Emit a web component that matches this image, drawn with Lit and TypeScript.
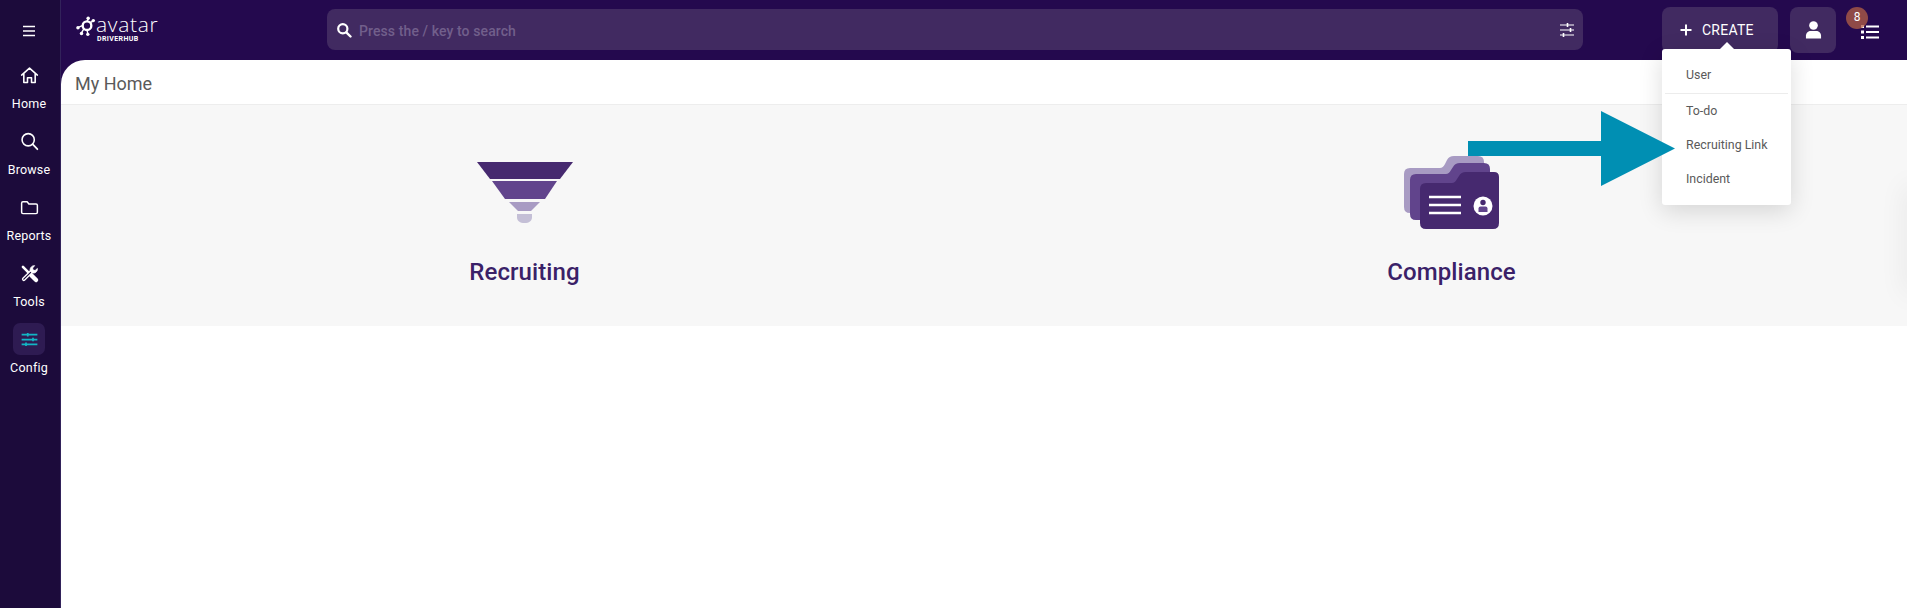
import { LitElement, html, css, svg } from "lit";
import { customElement } from "lit/decorators.js";

const navIcons: Record<string, unknown> = {
  Home: svg`<path d="M3 11.500 12 3.500l9 8M5.500 9.800V20h4.200v-5.500h4.600V20h4.200V9.800" fill="none" stroke="#fff" stroke-width="1.800" stroke-linejoin="round" stroke-linecap="round"/>`,
  Browse: svg`<circle cx="10.500" cy="10" r="7" fill="none" stroke="#fff" stroke-width="1.800"/><path d="M15.800 15.300 21 20.800" stroke="#fff" stroke-width="2" stroke-linecap="round"/>`,
  Reports: svg`<path d="M3 7A1.500 1.500 0 0 1 4.500 5.500h4.800l2 2.500h8.200A1.500 1.500 0 0 1 21 9.500v8A1.500 1.500 0 0 1 19.500 19h-15A1.500 1.500 0 0 1 3 17.500z" fill="none" stroke="#fff" stroke-width="1.700" stroke-linejoin="round"/>`,
  Tools: svg`<path d="M4.500 4.500 11 11" stroke="#fff" stroke-width="3" stroke-linecap="round"/><path d="M14 14l5.500 5.500" stroke="#fff" stroke-width="5" stroke-linecap="round"/><path d="M5.500 18.500 14.500 9.500" stroke="#fff" stroke-width="4.400" stroke-linecap="round"/><path d="M5.500 18.500 14.500 9.500" stroke="#1c0b3b" stroke-width="1.400" stroke-linecap="round"/><path d="M13 9.500c-1-2.800.8-6.500 4.800-6.500l-2.300 2.700.5 2.400 2.400.5L21 6.300c.300 4-3.200 5.900-6 4.800z" fill="#fff" stroke="#fff" stroke-width="1"/>`,
};

@customElement("app-root")
export class AppRoot extends LitElement {
  static styles = css`
    :host {
      display: grid;
      grid-template-columns: 61px 1fr;
      height: 608px;
      position: relative;
      overflow: hidden;
      font-family: Roboto, "Liberation Sans", sans-serif;
      background: #24094e;
    }
    .side {
      background: #1c0b3b;
      border-right: 1px solid #32225a;
      box-sizing: border-box;
      display: flex;
      flex-direction: column;
      align-items: center;
      padding: 21px 2px 0 0;
    }
    .burger { width: 20px; height: 20px; display: block; margin-bottom: 18px; }
    .nav {
      height: 66px;
      width: 100%;
      display: flex;
      flex-direction: column;
      align-items: center;
      color: #fff;
      font-size: 12.500px;
      letter-spacing: 0.2px;
      line-height: 16px;
    }
    .nav .ic {
      width: 32px;
      height: 32px;
      border-radius: 7px;
      display: flex;
      align-items: center;
      justify-content: center;
      margin-bottom: 5px;
    }
    .nav svg { width: 21px; height: 21px; }
    .nav.on .ic { background: #2e1b52; }
    .main { display: flex; flex-direction: column; min-width: 0; }
    .top {
      height: 60px;
      flex: none;
      display: flex;
      align-items: flex-start;
      background: #24094e;
    }
    .logo { margin: 14px 0 0 15px; width: 86px; height: 30px; flex: none; position: relative; }
    .logo svg { display: block; width: 22px; height: 21px; position: absolute; left: 0; top: 2px; }
    .logo .a { position: absolute; left: 20px; top: 0; color: #fff; font: 300 21px/21px "Open Sans", Roboto, sans-serif; letter-spacing: .7px; }
    .logo .d { position: absolute; left: 21px; top: 21px; color: #fff; font: 700 7px/8px Roboto, sans-serif; letter-spacing: .4px; }
    .search {
      margin: 9px 0 0 165px;
      width: 1256px;
      height: 41px;
      border-radius: 8px;
      background: #412a61;
      display: flex;
      align-items: center;
      padding: 0 8px 0 9px;
      box-sizing: border-box;
      flex: none;
    }
    .search .ph { flex: 1; margin-left: 7px; padding-top: 2px; font-size: 14px; font-weight: 500; color: #715f8b; letter-spacing: .1px; }
    .create {
      margin: 7px 0 0 79px;
      width: 116px;
      height: 46px;
      border-radius: 8px;
      background: #412a61;
      color: #fff;
      font-size: 14px;
      font-weight: 400;
      display: flex;
      align-items: center;
      padding-left: 18px;
      box-sizing: border-box;
      gap: 10px;
      flex: none;
      letter-spacing: .25px;
    }
    .user {
      margin: 7px 0 0 12px;
      width: 46px;
      height: 46px;
      border-radius: 8px;
      background: #412a61;
      display: flex;
      align-items: center;
      justify-content: center;
      flex: none;
    }
    .user svg { margin-left: 1px; }
    .tasks { margin: 25px 0 0 25px; flex: none; position: relative; width: 18px; height: 14px; }
    .tasks svg { display: block; }
    .badge {
      position: absolute;
      left: -15px;
      top: -18px;
      width: 22px;
      height: 22px;
      border-radius: 50%;
      background: rgba(179, 96, 69, 0.75);
      color: #fff;
      font-size: 12px;
      line-height: 20px;
      text-align: center;
    }
    .content {
      flex: 1;
      background: #fff;
      border-top-left-radius: 24px;
      display: flex;
      flex-direction: column;
    }
    .title {
      height: 45px;
      flex: none;
      box-sizing: border-box;
      padding: 2px 14px 0;
      display: flex;
      align-items: center;
      font-size: 18px;
      color: #5a5a5a;
      border-bottom: 1px solid #ededed;
    }
    .band {
      height: 221px;
      background: #f7f7f7;
      display: grid;
      grid-template-columns: 927px 927px;
      flex: none;
    }
    .card {
      display: flex;
      flex-direction: column;
      align-items: center;
      padding-top: 50px;
      color: #3a2168;
      font-size: 24px;
      font-weight: 500;
      line-height: 30px;
      letter-spacing: .1px;
    }
    .card svg { display: block; height: 78px; margin-bottom: 24px; }
    .menu {
      position: absolute;
      left: 1662px;
      top: 49px;
      width: 129px;
      height: 156px;
      background: #fff;
      border-radius: 3px;
      box-shadow: 0 6px 24px rgba(0, 0, 0, 0.14);
      box-sizing: border-box;
      padding: 8px 3px 0;
      font-size: 12.400px;
      color: #5a5a5a;
    }
    .menu::before {
      content: "";
      position: absolute;
      left: 58px;
      top: -7px;
      border: 7px solid transparent;
      border-top: 0;
      border-bottom-color: #fff;
    }
    .menu div { height: 34px; line-height: 34px; padding-left: 21px; }
    .menu .u { height: 36px; line-height: 35px; border-bottom: 1px solid #ececec; margin-bottom: 0; }
    .arrow { position: absolute; left: 1468px; top: 111px; width: 207px; height: 75px; display: block; }
    .edge {
      position: absolute;
      left: 1912px;
      top: 190px;
      width: 4px;
      height: 100px;
      box-shadow: 0 0 28px 4px rgba(0, 0, 0, 0.1);
    }
  `;

  private navItem(name: string) {
    return html`<div class="nav"><span class="ic"><svg viewBox="0 0 24 24">${navIcons[name]}</svg></span>${name}</div>`;
  }

  render() {
    return html`
      <aside class="side">
        <svg class="burger" viewBox="0 0 20 20"><path d="M4 5.500h12M4 10h12M4 14.500h12" stroke="#fff" stroke-width="1.300"/></svg>
        ${["Home", "Browse", "Reports", "Tools"].map((n) => this.navItem(n))}
        <div class="nav on">
          <span class="ic">
            <svg viewBox="0 0 24 24">
              <path d="M3 6.500h18M3 12h18M3 17.500h18" stroke="#12b5c4" stroke-width="2"/>
              <path d="M10 4.500v4M16 10v4M8 15.500v4" stroke="#12b5c4" stroke-width="2"/>
            </svg>
          </span>Config
        </div>
      </aside>
      <div class="main">
        <header class="top">
          <div class="logo">
            <svg viewBox="0 0 28 26">
              <circle cx="14" cy="12" r="5.500" fill="none" stroke="#fff" stroke-width="3"/>
              <path d="M14 7 16 2M18 8l4-2M8 12 3 14M10 16l-3 5M14 17l1 5" stroke="#fff" stroke-width="1.800"/>
              <circle cx="15.500" cy="2.500" r="2.200" fill="#fff"/><circle cx="22" cy="5.500" r="2.200" fill="#fff"/><circle cx="2.500" cy="14.500" r="2.200" fill="#fff"/><circle cx="7" cy="22" r="2.200" fill="#fff"/><circle cx="15" cy="23" r="2.200" fill="#fff"/>
            </svg>
            <span class="a">avatar</span>
            <span class="d">DRIVERHUB</span>
          </div>
          <div class="search">
            <svg width="16" height="16" viewBox="0 0 16 16"><circle cx="6.800" cy="6.800" r="4.600" fill="none" stroke="#fff" stroke-width="2.200"/><path d="m10.300 10.300 4.200 4.200" stroke="#fff" stroke-width="2.400" stroke-linecap="round"/></svg>
            <span class="ph">Press the / key to search</span>
            <svg width="16" height="16" viewBox="0 0 16 16"><path d="M1 3h14M1 8h14M1 13h14" stroke="#fff" stroke-width="1.200"/><path d="M8.500 1v4M11.500 6v4M4.500 11v4" stroke="#fff" stroke-width="1.600"/></svg>
          </div>
          <div class="create">
            <svg width="12" height="12" viewBox="0 0 12 12"><path d="M6 .5v11M.5 6h11" stroke="#fff" stroke-width="2"/></svg>
            CREATE
          </div>
          <div class="user">
            <svg width="17" height="18" viewBox="0 0 18 20" preserveAspectRatio="none"><circle cx="9" cy="5" r="4.600" fill="#fff"/><path d="M1 19.500v-3.200C1 13 3.600 11 6 11h6c2.400 0 5 2 5 5.300v3.200z" fill="#fff"/></svg>
          </div>
          <div class="tasks">
            <svg width="18" height="14" viewBox="0 0 18 14"><path d="M0 0h3v3H0zM0 5.500h3v3H0zM0 11h3v3H0z" fill="#fff"/><path d="M5 1.500h13M5 7h13M5 12.500h13" stroke="#fff" stroke-width="2"/></svg>
            <span class="badge">8</span>
          </div>
        </header>
        <section class="content">
          <div class="title">My Home</div>
          <div class="band">
            <div class="card">
              <svg viewBox="0 0 96 78" width="96">
                <path d="M0 7h96L83 24H13z" fill="#46296f"/>
                <path d="M15 26h65L68 44H28z" fill="#61448c"/>
                <path d="M32 47h31l-9 9H41z" fill="#a89bc3"/>
                <path d="M40 59h15v3c0 4-3 6-7.500 6S40 66 40 62z" fill="#c4bfd6"/>
              </svg>
              Recruiting
            </div>
            <div class="card">
              <svg viewBox="0 0 96 78" width="96">
                <path d="M6 13H36Q39 13 41 9L43 5Q45 1 50 1H74Q80 1 80 7V58H6Q0 58 0 52V19Q0 13 6 13z" fill="#a89bc3"/>
                <path d="M12 19H42Q45 19 47 15L49 12Q51 8 56 8H80Q86 8 86 14V65H12Q6 65 6 59V25Q6 19 12 19z" fill="#61448c"/>
                <path d="M22 28H48Q51 28 53 24L55 21Q57 17 62 17H90Q95 17 95 22V68Q95 74 89 74H22Q16 74 16 68V34Q16 28 22 28z" fill="#46296f"/>
                <path d="M25 42h32M25 50h32M25 58h32" stroke="#fff" stroke-width="2.400"/>
                <circle cx="79" cy="51" r="9.500" fill="#fff"/>
                <circle cx="79" cy="47.500" r="2.700" fill="#46296f"/>
                <path d="M74.500 57v-3.500q0-2 2-2h5q2 0 2 2V57z" fill="#61448c"/>
              </svg>
              Compliance
            </div>
          </div>
        </section>
      </div>
      <div class="menu">
        <div class="u">User</div>
        <div>To-do</div>
        <div>Recruiting Link</div>
        <div>Incident</div>
      </div>
      <svg class="arrow" viewBox="0 0 207 75"><path d="M0 30h133V0l74 37.500L133 75V45H0z" fill="#008fb3"/></svg>
      <div class="edge"></div>
    `;
  }
}
